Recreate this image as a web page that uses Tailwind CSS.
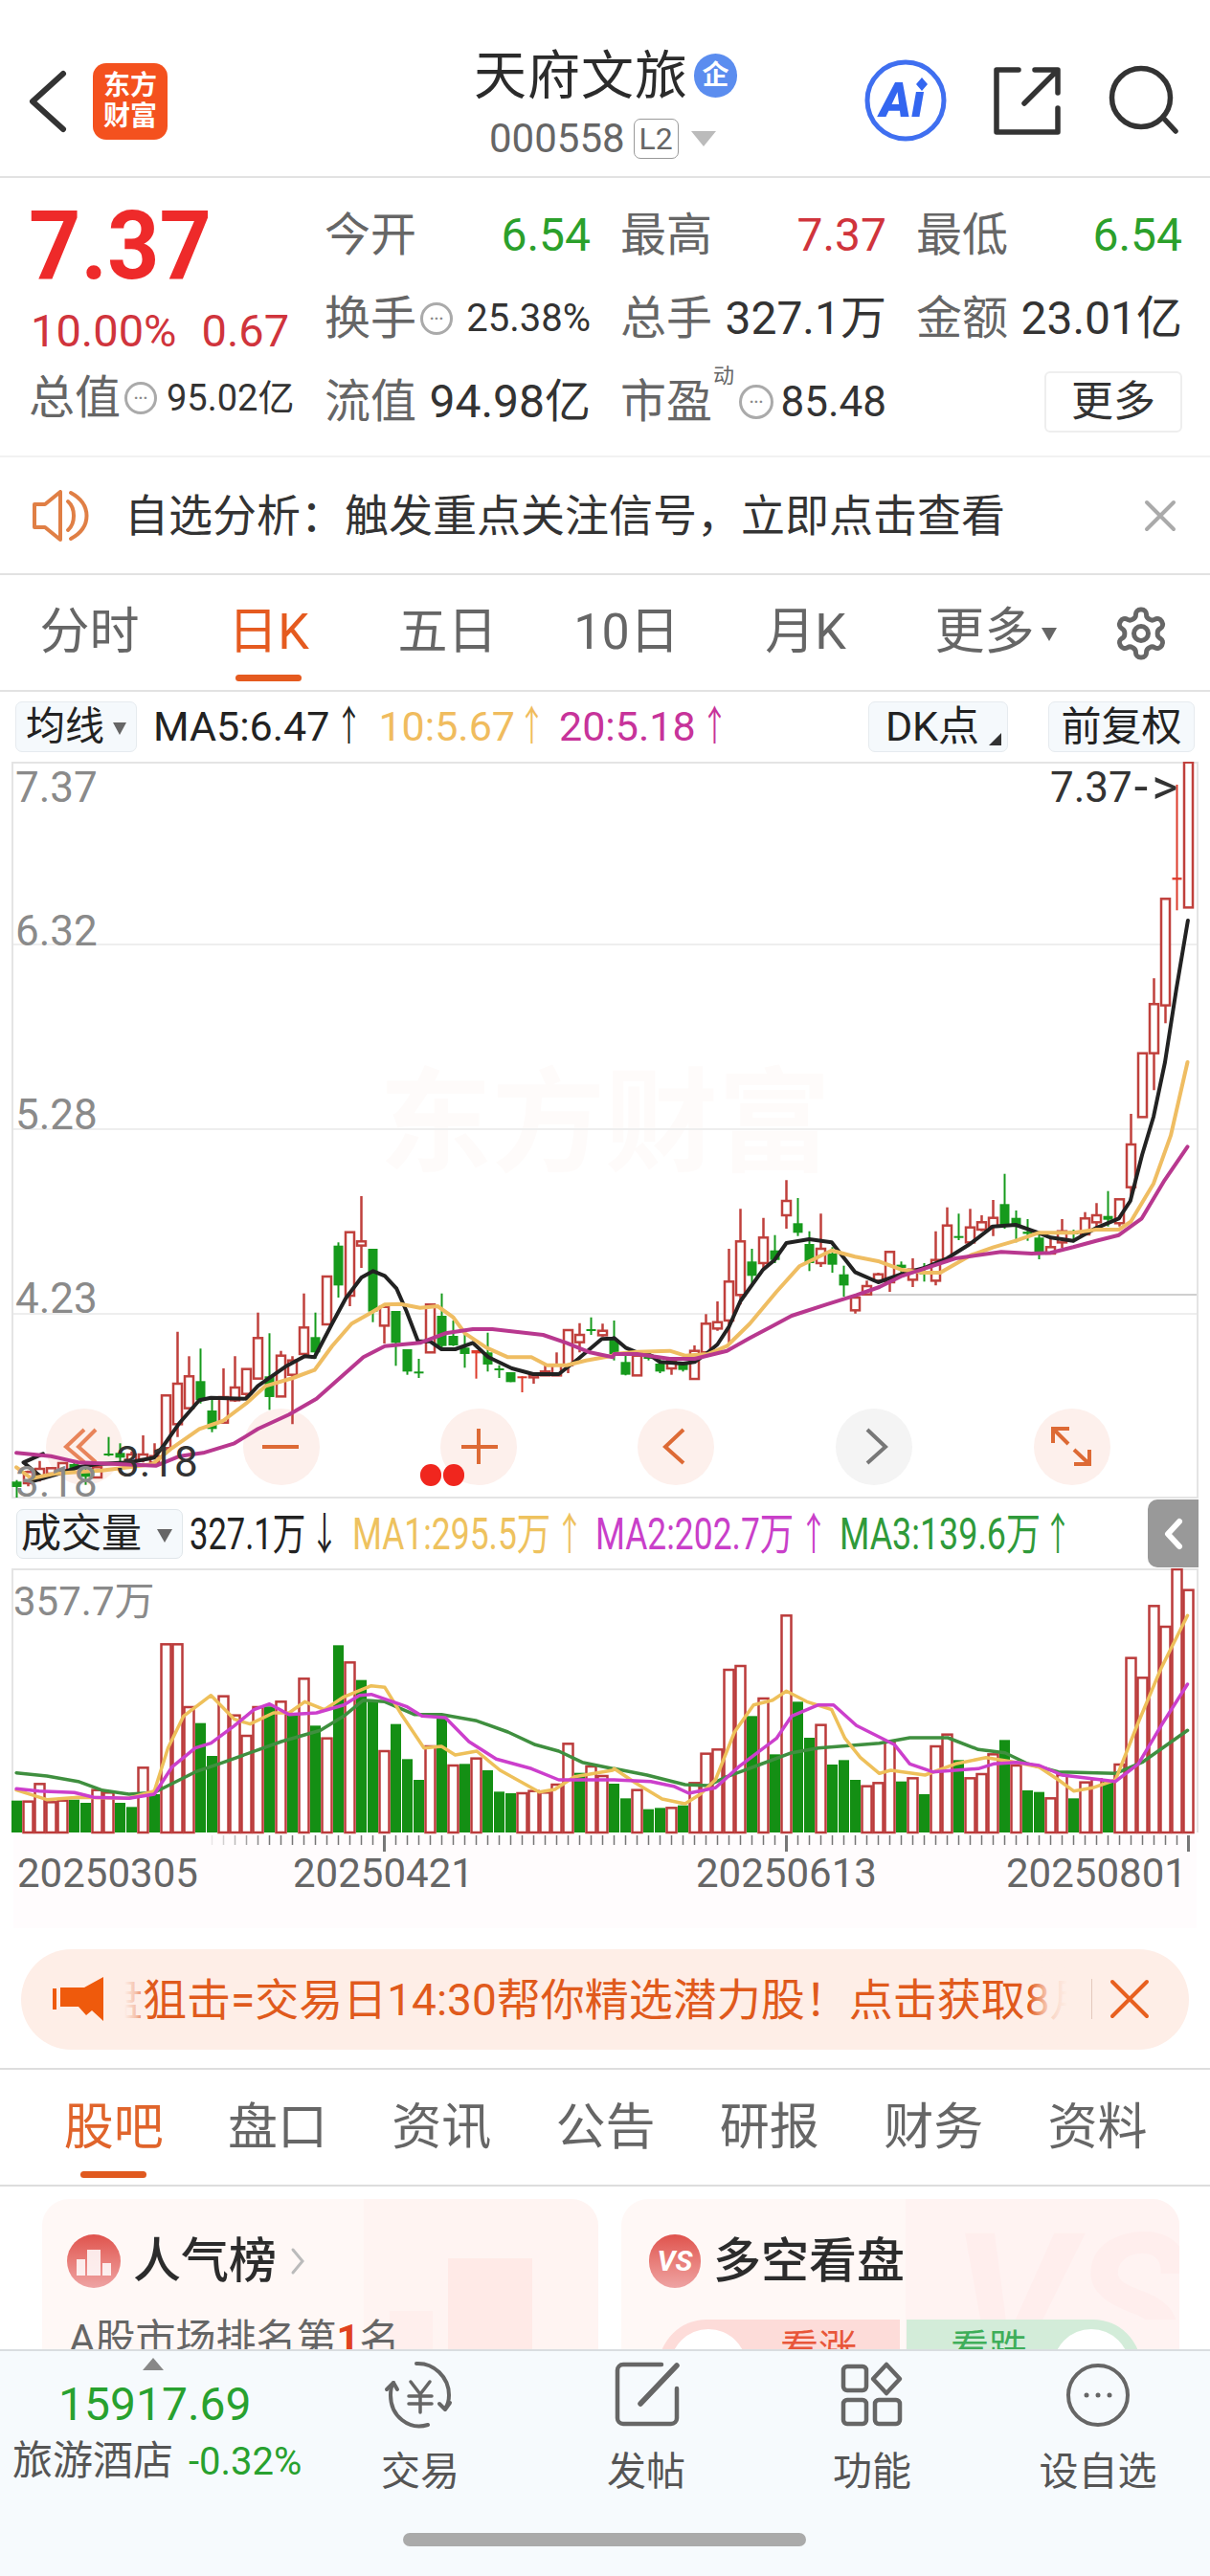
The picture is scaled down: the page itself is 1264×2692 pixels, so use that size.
<!DOCTYPE html>
<html lang="zh-CN">
<head>
<meta charset="UTF-8" />
<title>天府文旅 000558</title>
<script src="https://cdn.jsdelivr.net/npm/@tailwindcss/browser@4"></script>
</head>
<body class="bg-white">
<div class="w-[1264px] h-[2692px] overflow-hidden flex flex-col bg-white text-[#333] font-[family-name:Roboto,'Noto_Sans_CJK_SC',sans-serif]">

  <!-- Header -->
  <header class="flex items-start h-[186px] shrink-0 border-b-2 border-[#e2e2e2]">
    <svg class="ml-[28px] mt-[70px] w-[44px] h-[72px]" viewBox="28 70 44 72" fill="none" stroke="#333" stroke-width="6" stroke-linecap="round" stroke-linejoin="round"><path d="M66 77 34 106 66 135"/></svg>
    <div class="ml-[25px] mt-[66px] w-[78px] h-[80px] rounded-[14px] bg-[#f4511e] text-white font-bold text-[28px] leading-[32px] flex flex-col items-center justify-center">
      <span>东方</span><span>财富</span>
    </div>
    <div class="ml-[320px] flex flex-col">
      <div class="mt-[51px] h-[56px] flex items-center">
        <span class="text-[55px] leading-none tracking-[1px] text-[#2b2b2b] whitespace-nowrap">天府文旅</span>
        <span class="ml-[6px] w-[45px] h-[46px] rounded-full bg-[#5b8def] text-white text-[28px] font-bold flex items-center justify-center">企</span>
      </div>
      <div class="mt-[16px] pl-[16px] h-[44px] flex items-center">
        <span class="text-[42px] leading-none text-[#666]">000558</span>
        <span class="ml-[9px] w-[47px] h-[42px] border border-[#999] rounded-[7px] text-[32px] text-[#666] flex items-center justify-center">L2</span>
        <span class="ml-[13px] w-0 h-0 border-x-[13px] border-x-transparent border-t-[16px] border-t-[#bbb]"></span>
      </div>
    </div>
    <svg class="ml-auto mr-[24px] mt-[50px] w-[340px] h-[100px]" viewBox="900 50 340 100" fill="none" stroke-linecap="round" stroke-linejoin="round">
      <circle cx="946" cy="105" r="40" stroke="#3f6ff0" stroke-width="5"/>
      <text x="919" y="122" fill="#3366f0" font-size="50" font-weight="900" font-style="italic" font-family="Roboto">Aı</text>
      <path d="M963 81 969 88 963 95 957 88Z" fill="#3366f0"/>
      <g stroke="#333" stroke-width="5.5">
        <path d="M1064 73H1041V138H1105V113"/>
        <path d="M1070 108 1104 74M1081 73H1105V97"/>
        <circle cx="1192" cy="102" r="30.5"/>
        <path d="M1215 123 1228 137"/>
      </g>
    </svg>
  </header>

  <!-- Quote stats -->
  <section class="flex h-[292px] shrink-0 pl-[32px] pt-[16px] border-b-2 border-[#f2f2f2]">
    <div class="w-[307px] shrink-0 flex flex-col">
      <div class="h-[114px] flex items-center text-[100px] leading-none font-bold text-[#ee2a2a] -ml-[2px] -mt-[2px]"><span class="inline-block origin-left scale-x-[0.95]">7.37</span></div>
      <div class="h-[62px] flex items-center text-[47px] leading-none text-[#d0343c]"><span>10.00%</span><span class="ml-[26px]">0.67</span></div>
      <div class="h-[80px] flex items-center leading-none -ml-[2px]">
        <span class="text-[48px] text-[#666]">总值</span>
        <span class="ml-[4px] w-[34px] h-[34px] rounded-full border-[3px] border-[#aaa] text-[#888] text-[16px] font-bold flex items-center justify-center">···</span>
        <span class="ml-[10px] text-[38px]">95.02亿</span>
      </div>
    </div>
    <div class="grid grid-cols-[278px_278px_278px] gap-x-[31px] auto-rows-[87px] items-center leading-none">
      <div class="flex justify-between items-center"><span class="text-[48px] text-[#666]">今开</span><span class="text-[48px] text-[#2ba02b]">6.54</span></div>
      <div class="flex justify-between items-center"><span class="text-[48px] text-[#666]">最高</span><span class="text-[48px] text-[#d0343c]">7.37</span></div>
      <div class="flex justify-between items-center"><span class="text-[48px] text-[#666]">最低</span><span class="text-[48px] text-[#2ba02b]">6.54</span></div>

      <div class="flex justify-between items-center">
        <span class="flex items-center text-[48px] text-[#666]">换手<span class="ml-[4px] w-[34px] h-[34px] rounded-full border-[3px] border-[#aaa] text-[#888] text-[16px] font-bold flex items-center justify-center">···</span></span>
        <span class="text-[40px]">25.38%</span>
      </div>
      <div class="flex justify-between items-center"><span class="text-[48px] text-[#666]">总手</span><span class="text-[48px]">327.1万</span></div>
      <div class="flex justify-between items-center"><span class="text-[48px] text-[#666]">金额</span><span class="text-[48px]">23.01亿</span></div>

      <div class="flex justify-between items-center"><span class="text-[48px] text-[#666]">流值</span><span class="text-[48px]">94.98亿</span></div>
      <div class="flex justify-between items-center">
        <span class="relative flex items-center text-[48px] text-[#666]">市盈<span class="absolute left-[97px] -top-[14px] text-[22px]">动</span><span class="ml-[28px] w-[36px] h-[36px] rounded-full border-[3px] border-[#aaa] text-[#888] text-[16px] font-bold flex items-center justify-center">···</span></span>
        <span class="text-[44px]">85.48</span>
      </div>
      <div class="flex justify-end"><span class="w-[144px] h-[64px] rounded-[6px] border-2 border-[#eeeeee] text-[44px] flex items-center justify-center">更多</span></div>
    </div>
  </section>

  <!-- Notice -->
  <section class="flex items-center h-[123px] shrink-0 border-b-2 border-[#e2e2e2]">
    <svg class="ml-[34px] w-[60px] h-[54px]" viewBox="34 511 60 54" fill="none" stroke="#e07f45" stroke-width="4" stroke-linecap="round" stroke-linejoin="round"><path d="M36 526H47L63 513V563L47 550H36Z"/><path d="M71 523C79 530 79 546 71 553"/><path d="M74 514C96 526 96 550 74 562"/></svg>
    <span class="ml-[36px] text-[46px] leading-none text-[#333] whitespace-nowrap">自选分析：触发重点关注信号，立即点击查看</span>
    <svg class="ml-auto mr-[34px] w-[36px] h-[36px]" viewBox="0 0 36 36" stroke="#aaa" stroke-width="4" stroke-linecap="round"><path d="M4 4 32 32M32 4 4 32"/></svg>
  </section>

  <!-- Period tabs -->
  <nav class="relative h-[122px] shrink-0 grid grid-cols-[repeat(6,187px)] items-center border-b-2 border-[#e2e2e2] text-[52px] leading-none text-[#666] text-center">
    <span>分时</span>
    <span class="text-[#e55a1f]">日K</span>
    <span>五日</span>
    <span>10日</span>
    <span>月K</span>
    <span class="relative">更多<span class="absolute left-[153px] top-[21px] w-0 h-0 border-x-[8px] border-x-transparent border-t-[14px] border-t-[#666]"></span></span>
    <span class="absolute left-[246px] top-[104px] w-[69px] h-[7px] rounded-full bg-[#e55a1f]"></span>
    <svg class="absolute left-[1162px] top-[31px] w-[60px] h-[60px]" viewBox="0 0 24 24" fill="none" stroke="#666" stroke-width="2" stroke-linecap="round" stroke-linejoin="round"><path d="M12.22 2h-.44a2 2 0 0 0-2 2v.18a2 2 0 0 1-1 1.73l-.43.25a2 2 0 0 1-2 0l-.15-.08a2 2 0 0 0-2.73.73l-.22.38a2 2 0 0 0 .73 2.73l.15.1a2 2 0 0 1 1 1.72v.51a2 2 0 0 1-1 1.74l-.15.09a2 2 0 0 0-.73 2.73l.22.38a2 2 0 0 0 2.73.73l.15-.08a2 2 0 0 1 2 0l.43.25a2 2 0 0 1 1 1.73V20a2 2 0 0 0 2 2h.44a2 2 0 0 0 2-2v-.18a2 2 0 0 1 1-1.73l.43-.25a2 2 0 0 1 2 0l.15.08a2 2 0 0 0 2.73-.73l.22-.39a2 2 0 0 0-.73-2.73l-.15-.08a2 2 0 0 1-1-1.74v-.5a2 2 0 0 1 1-1.74l.15-.09a2 2 0 0 0 .73-2.73l-.22-.38a2 2 0 0 0-2.73-.73l-.15.08a2 2 0 0 1-2 0l-.43-.25a2 2 0 0 1-1-1.73V4a2 2 0 0 0-2-2z"/><circle cx="12" cy="12" r="3"/></svg>
  </nav>

  <!-- MA legend -->
  <div class="flex items-center h-[73px] shrink-0 text-[43px] leading-none whitespace-nowrap">
    <span class="relative ml-[16px] w-[127px] h-[53px] rounded-[7px] bg-[#f5f9fc] border border-[#e6ebef] text-[41px] text-[#222] flex items-center pl-[10px]">均线<span class="absolute left-[101px] top-[21px] w-0 h-0 border-x-[7px] border-x-transparent border-t-[13px] border-t-[#666]"></span></span>
    <span class="ml-[17px] text-[#222]">MA5:6.47</span>
    <span class="ml-[5px] w-[30px] flex justify-center text-[#222]"><span class="inline-block scale-x-[0.65]">↑</span></span>
    <span class="ml-[16px] text-[#f0bc5e]">10:5.67</span>
    <span class="ml-[3px] w-[30px] flex justify-center text-[#f0bc5e]"><span class="inline-block scale-x-[0.65]">↑</span></span>
    <span class="ml-[13px] text-[#c7339a]">20:5.18</span>
    <span class="ml-[5px] w-[30px] flex justify-center text-[#c7339a]"><span class="inline-block scale-x-[0.65]">↑</span></span>
    <span class="relative ml-auto w-[146px] h-[53px] rounded-[7px] bg-[#f5f9fc] border border-[#e6ebef] text-[#222] flex items-center justify-center pr-[12px]">DK点<span class="absolute right-[6px] bottom-[6px] w-0 h-0 border-l-[13px] border-l-transparent border-b-[13px] border-b-[#333]"></span></span>
    <span class="ml-[42px] mr-[16px] w-[153px] h-[53px] rounded-[7px] bg-[#f5f9fc] border border-[#e6ebef] text-[42px] text-[#222] flex items-center justify-center">前复权</span>
  </div>

  <!-- Candles -->
  <section class="relative h-[770px] shrink-0">
    <span class="absolute left-[396px] top-[320px] text-[118px] leading-none font-bold text-[#fefbfa] whitespace-nowrap">东方财富</span>
    <svg id="kline" class="absolute inset-0 w-[1264px] h-[770px]" viewBox="0 796 1264 770" fill="none">
      <path d="M13 1566V797H1251V1566" stroke="#e4e4e4" stroke-width="2"/>
      <path d="M13 1565H1251" stroke="#e4e4e4" stroke-width="2"/>
      <path d="M14 987H1250M14 1180H1250M14 1373H1250" stroke="#eeeeee" stroke-width="2"/>
      <path d="M900 1353H1250" stroke="#cfcfcf" stroke-width="2"/>
      <circle cx="88" cy="1512" r="40" fill="#fdf0ec"/>
      <circle cx="294" cy="1512" r="40" fill="#fdf0ec"/>
      <circle cx="500" cy="1512" r="40" fill="#fdf0ec"/>
      <circle cx="706" cy="1512" r="40" fill="#fdf0ec"/>
      <circle cx="913" cy="1512" r="40" fill="#f4f4f4"/>
      <circle cx="1120" cy="1512" r="40" fill="#fdf0ec"/>
      <g stroke="#dd6a35" stroke-width="4">
        <path d="M88 1494 69 1512 88 1528M100 1494 82 1512 100 1528" stroke="#e8845a"/>
        <path d="M274 1512H312"/>
        <path d="M482 1512H520M500 1493V1530"/>
        <path d="M714 1494 695 1512 714 1529"/>
        <path d="M906 1494 925 1512 906 1529" stroke="#777"/>
        <path d="M1100 1508V1493H1117M1100 1493 1116 1509M1138 1515V1530H1122M1138 1530 1122 1515"/>
      </g>
    </svg>
    <span class="absolute left-[16px] top-[5px] text-[44px] leading-[44px] text-[#8a8a8a]">7.37</span>
    <span class="absolute left-[16px] top-[155px] text-[44px] leading-[44px] text-[#8a8a8a]">6.32</span>
    <span class="absolute left-[16px] top-[347px] text-[44px] leading-[44px] text-[#8a8a8a]">5.28</span>
    <span class="absolute left-[16px] top-[539px] text-[44px] leading-[44px] text-[#8a8a8a]">4.23</span>
    <span class="absolute left-[16px] top-[736px] text-[44px] leading-[34px] text-[#8a8a8a]">3.18</span>
    <span class="absolute left-[121px] top-[710px] text-[44px] leading-[44px] text-[#333]">3.18</span>
    <span class="absolute left-[1097px] top-[5px] text-[44px] leading-[44px] text-[#333] whitespace-nowrap flex items-center">7.37<span class="ml-[2px] text-[52px] tracking-[4px]">-&gt;</span></span>
    <span class="absolute left-[439px] top-[734px] w-[22px] h-[23px] rounded-full bg-[#f0261e]"></span>
    <span class="absolute left-[463px] top-[734px] w-[22px] h-[23px] rounded-full bg-[#f0261e]"></span>
  </section>

  <!-- Volume legend -->
  <div class="relative flex items-center h-[73px] shrink-0 text-[46px] leading-none whitespace-nowrap">
    <span class="relative ml-[17px] w-[174px] h-[52px] rounded-[7px] bg-[#f5f9fc] border border-[#e0e6ea] text-[42px] text-[#222] flex items-center pl-[4px]">成交量<span class="absolute left-[146px] top-[20px] w-0 h-0 border-x-[8px] border-x-transparent border-t-[14px] border-t-[#666]"></span></span>
    <span class="ml-[7px] w-[120px] text-[#222]"><span class="inline-block origin-left scale-x-[0.75]">327.1万</span></span>
    <span class="ml-[6px] w-[30px] flex justify-center text-[#222]"><span class="inline-block scale-x-[0.65]">↓</span></span>
    <span class="ml-[14px] w-[204px] text-[#eec25e]"><span class="inline-block origin-left scale-x-[0.77]">MA1:295.5万</span></span>
    <span class="ml-[8px] w-[30px] flex justify-center text-[#eec25e]"><span class="inline-block scale-x-[0.65]">↑</span></span>
    <span class="ml-[12px] w-[204px] text-[#c93fc9]"><span class="inline-block origin-left scale-x-[0.77]">MA2:202.7万</span></span>
    <span class="ml-[9px] w-[30px] flex justify-center text-[#c93fc9]"><span class="inline-block scale-x-[0.65]">↑</span></span>
    <span class="ml-[12px] w-[208px] text-[#2f9a3a]"><span class="inline-block origin-left scale-x-[0.78]">MA3:139.6万</span></span>
    <span class="ml-[5px] w-[30px] flex justify-center text-[#2f9a3a]"><span class="inline-block scale-x-[0.65]">↑</span></span>
    <span class="absolute left-[1199px] top-[1px] w-[53px] h-[71px] rounded-l-[10px] bg-[#999] flex items-center justify-center">
      <svg class="w-[24px] h-[36px]" viewBox="0 0 24 36" fill="none" stroke="#fff" stroke-width="6" stroke-linecap="round" stroke-linejoin="round"><path d="M18 5 6 18 18 31"/></svg>
    </span>
  </div>

  <!-- Volume -->
  <section class="relative h-[398px] shrink-0">
    <div class="absolute left-[14px] top-[276px] w-[1236px] h-[100px] bg-[#fffcfd]"></div>
    <svg id="vol" class="absolute left-0 top-0 w-[1264px] h-[300px]" viewBox="0 1639 1264 300" fill="none">
      <path d="M13 1915V1640H1251V1915" stroke="#e4e4e4" stroke-width="2"/>
    </svg>
    <span class="absolute left-[14px] top-[14px] text-[42px] leading-[42px] text-[#8a8a8a]">357.7万</span>
    <span class="absolute left-[18px] top-[298px] text-[42px] leading-[42px] text-[#666]">20250305</span>
    <span class="absolute left-[306px] top-[298px] text-[42px] leading-[42px] text-[#666]">20250421</span>
    <span class="absolute left-[727px] top-[298px] text-[42px] leading-[42px] text-[#666]">20250613</span>
    <span class="absolute left-[1051px] top-[298px] text-[42px] leading-[42px] text-[#666]">20250801</span>
  </section>

  <!-- Ad banner -->
  <div class="h-[126px] shrink-0 border-b-2 border-[#dddddd]">
    <div class="relative mx-[22px] h-[105px] rounded-full bg-[#feeee7] flex items-center overflow-hidden">
      <svg class="absolute left-[33px] top-[29px] w-[56px] h-[46px]" viewBox="55 2066 56 46" fill="#ef5a0c"><path d="M55 2078H59V2100H55Z"/><path d="M63 2077H88L108 2066V2112L96 2101 90 2106 82 2097H63Z"/></svg>
      <div class="absolute left-[108px] top-0 w-[985px] h-[105px] flex items-center overflow-hidden">
        <span class="-ml-[73px] text-[46px] leading-none text-[#e05a1c] whitespace-nowrap">尾盘狙击=交易日14:30帮你精选潜力股！点击获取8月新股</span>
        <span class="absolute left-0 top-0 w-[24px] h-full bg-gradient-to-r from-[#feeee7] via-[#feeee7]/70 to-[#feeee7]/0"></span>
        <span class="absolute right-0 top-0 w-[40px] h-full bg-gradient-to-l from-[#feeee7] via-[#feeee7]/80 to-[#feeee7]/0"></span>
      </div>
      <span class="absolute left-[1118px] top-[31px] w-px h-[42px] bg-[#e3c9bd]"></span>
      <svg class="absolute left-[1136px] top-[31px] w-[44px] h-[42px]" viewBox="0 0 44 42" stroke="#e8601f" stroke-width="4" stroke-linecap="round"><path d="M4 3 40 39M40 3 4 39"/></svg>
    </div>
  </div>

  <!-- Content tabs -->
  <nav class="relative h-[122px] shrink-0 pl-[33px] pt-[2px] grid grid-cols-[repeat(7,171.3px)] items-center border-b-2 border-[#dddddd] text-[52px] leading-none text-[#666] text-center">
    <span class="text-[#e0642b]">股吧</span>
    <span>盘口</span>
    <span>资讯</span>
    <span>公告</span>
    <span>研报</span>
    <span>财务</span>
    <span>资料</span>
    <span class="absolute left-[84px] top-[106px] w-[69px] h-[7px] rounded-full bg-[#e0591f]"></span>
  </nav>

  <!-- Cards, cut off by the bottom bar -->
  <div class="flex-1 min-h-0 overflow-hidden pt-[13px] pl-[44px] flex gap-[24px]">
    <div class="relative w-[581px] h-[300px] rounded-t-[28px] bg-[#fff8f6] overflow-hidden">
      <div class="absolute left-[336px] top-0 w-[245px] h-[300px] rounded-tr-[28px] bg-[#fff4f2]"></div>
      <div class="absolute left-[424px] top-[62px] w-[88px] h-[240px] bg-[#ffeae7]"></div>
      <div class="absolute left-[363px] top-[117px] w-[45px] h-[200px] bg-[#ffefed]"></div>
      <div class="absolute left-[26px] top-[37px] w-[56px] h-[56px] rounded-full bg-gradient-to-b from-[#df524d] to-[#eea3a3] flex items-end justify-center gap-[2px] pb-[13px]">
        <span class="w-[9px] h-[17px] bg-white/85"></span>
        <span class="w-[14px] h-[27px] bg-white/85"></span>
        <span class="w-[9px] h-[13px] bg-white/85"></span>
      </div>
      <span class="absolute left-[95px] top-[40px] text-[50px] leading-[50px] font-medium text-[#2c2c2c]">人气榜</span>
      <svg class="absolute left-[259px] top-[49px] w-[16px] h-[32px]" viewBox="0 0 16 32" fill="none" stroke="#bbb" stroke-width="3" stroke-linecap="round"><path d="M3 4 13 16 3 28"/></svg>
      <span class="absolute left-[28px] top-[126px] text-[42px] leading-[42px] text-[#666] whitespace-nowrap">A股市场排名第<b class="text-[#e0421d]">1</b>名</span>
    </div>
    <div class="relative w-[583px] h-[300px] rounded-t-[28px] bg-[#fff8f6] overflow-hidden">
      <div class="absolute left-[297px] top-0 w-[286px] h-[300px] bg-[#fff3f2]"></div>
      <span class="absolute left-[345px] top-[10px] h-[116px] overflow-hidden text-[200px] leading-[200px] italic font-bold text-[#ffeeed]">VS</span>
      <span class="absolute left-[29px] top-[37px] w-[54px] h-[56px] rounded-full bg-gradient-to-b from-[#df524d] to-[#eea3a3] text-white text-[30px] leading-none italic font-bold flex items-center justify-center">VS</span>
      <span class="absolute left-[96px] top-[40px] text-[50px] leading-[50px] font-medium text-[#2c2c2c]">多空看盘</span>
      <div class="absolute left-[39px] top-[126px] w-[252px] h-[100px] rounded-tl-[50px] bg-[#fddcd9] overflow-hidden">
        <span class="absolute left-[12px] top-[10px] w-[80px] h-[80px] rounded-full bg-white"></span>
        <span class="absolute left-[127px] top-[11px] text-[40px] leading-[40px] text-[#e8563a]">看涨</span>
      </div>
      <div class="absolute left-[298px] top-[126px] w-[245px] h-[100px] rounded-tr-[50px] bg-[#d3ecd9] overflow-hidden">
        <span class="absolute right-[12px] top-[10px] w-[80px] h-[80px] rounded-full bg-white"></span>
        <span class="absolute left-[46px] top-[11px] text-[40px] leading-[40px] text-[#3fae5a]">看跌</span>
      </div>
    </div>
  </div>

  <!-- Bottom bar -->
  <footer class="relative h-[237px] shrink-0 bg-[#f6fafd] border-t-2 border-[#d9dde0] grid grid-cols-[321px_236px_236px_236px_236px] items-start text-[41px] leading-none text-[#555]">
    <div class="relative h-[140px]">
      <span class="absolute left-[149px] top-[7px] w-0 h-0 border-x-[11px] border-x-transparent border-b-[13px] border-b-[#888]"></span>
      <span class="absolute left-[61px] top-[32px] text-[48px] leading-[48px] text-[#28a12f]">15917.69</span>
      <span class="absolute left-[13px] top-[94px] text-[42px] leading-[42px] text-[#555] whitespace-nowrap">旅游酒店</span>
      <span class="absolute left-[197px] top-[96px] text-[40px] leading-[40px] text-[#28a12f]">-0.32%</span>
    </div>
    <div class="flex flex-col items-center pt-[9px]">
      <svg class="w-[80px] h-[74px]" viewBox="0 0 80 74" fill="none" stroke="#666" stroke-width="4" stroke-linecap="round" stroke-linejoin="round">
        <path d="M36 4C54 3 70 18 70 37 70 43 69 47 66 51M48 68C28 74 9 59 9 37 9 31 10 27 12 24"/>
        <path d="M5 31 12 24 16 31M60 46 66 52 71 45"/>
        <path d="M30 23 40 36 50 23M40 36V55M28 38H52M28 46H52" stroke-width="3.5"/>
      </svg>
      <span class="mt-[23px]">交易</span>
    </div>
    <div class="flex flex-col items-center pt-[9px]">
      <svg class="w-[80px] h-[74px]" viewBox="0 0 80 74" fill="none" stroke="#666" stroke-width="4.5" stroke-linecap="round" stroke-linejoin="round">
        <path d="M56 5H16A6 6 0 0 0 10 11V61A6 6 0 0 0 16 67H66A6 6 0 0 0 72 61V30"/>
        <path d="M72 6 34 46" stroke-width="5.5"/>
      </svg>
      <span class="mt-[23px]">发帖</span>
    </div>
    <div class="flex flex-col items-center pt-[9px]">
      <svg class="w-[80px] h-[74px]" viewBox="0 0 80 74" fill="none" stroke="#666" stroke-width="4.5" stroke-linejoin="round">
        <rect x="10" y="7" width="24" height="25" rx="4"/>
        <path d="M55 5 69 20 55 35 41 20Z"/>
        <rect x="10" y="42" width="24" height="25" rx="4"/>
        <rect x="43" y="42" width="26" height="25" rx="4"/>
      </svg>
      <span class="mt-[23px]">功能</span>
    </div>
    <div class="flex flex-col items-center pt-[9px]">
      <svg class="w-[80px] h-[74px]" viewBox="0 0 80 74" fill="none" stroke="#666" stroke-width="4">
        <circle cx="40" cy="37" r="31"/>
        <circle cx="28" cy="37" r="2.5" fill="#666" stroke="none"/>
        <circle cx="40" cy="37" r="2.5" fill="#666" stroke="none"/>
        <circle cx="52" cy="37" r="2.5" fill="#666" stroke="none"/>
      </svg>
      <span class="mt-[23px]">设自选</span>
    </div>
    <span class="absolute left-[421px] top-[190px] w-[421px] h-[14px] rounded-full bg-[#aaaaaa]"></span>
  </footer>
</div>

<script>
  // values read off the chart, y in 3x units from the given base row
  const candleX = (i) => 17.5 + 12 * i;

  // [type, high, body top, body bottom, low]
  const candlesLeft = [ // base 1200
    ["g",1040,1045,1062,1095],["r",1010,1015,1050,1060],["r",980,1005,1035,1045],["r",1000,1003,1020,1030],
    ["r",985,987,1010,1030],["g",985,990,1005,1020],["g",990,1010,1030,1055],["r",990,1000,1032,1032],
    ["g",905,960,963,965],["g",925,955,970,985],["r",950,960,985,990],["r",900,960,975,985],
    ["r",925,965,985,990],["r",775,775,940,960],["r",575,738,865,905],["r",652,715,815,815],
    ["g",628,730,790,800],["g",780,822,880,890],["r",690,780,860,860],["r",652,750,790,795],
    ["r",692,692,770,780],["r",515,595,722,722],["g",580,715,780,820],["r",635,650,778,778],
    ["r",652,665,710,865],["r",455,562,645,645],["g",515,592,640,660],["r",402,402,552,552],
    ["g",295,305,430,468],["r",263,263,462,495],["r",150,292,305,375],["g",315,315,512,545],
    ["r",497,497,556,612],["g",510,510,610,682],["g",630,630,700,710],["g",660,703,707,720],
    ["r",490,490,640,640],["g",455,525,620,625],["g",540,588,618,620],["g",580,625,645,688],
    ["d",638,638,648,722],["g",578,640,678,700],["g",680,693,697,720],["g",702,702,733,733],
    ["d",715,718,722,765],["r",710,710,718,738],["r",680,700,712,712],["r",640,680,712,712],
    ["r",570,570,680,705],["r",548,585,608,640],["g",530,570,574,585],["r",550,572,586,590],
  ];
  const candlesRight = [ // base 1100
    ["g",840,900,945,965],["g",950,970,1010,1012],["r",950,950,1012,1012],["g",945,945,960,965],
    ["g",960,975,1000,1005],["r",965,965,990,1010],["g",975,975,995,1000],["r",918,935,1023,1023],
    ["r",820,850,940,940],["r",780,845,865,872],["r",615,718,840,910],["r",490,592,760,790],
    ["g",615,655,700,730],["r",518,580,660,680],["g",572,620,650,660],["r",400,465,510,552],
    ["g",456,535,565,575],["g",560,600,660,685],["r",505,615,660,672],["g",610,630,665,690],
    ["g",668,695,730,765],["r",760,768,808,818],["r",715,732,758,760],["r",690,695,715,720],
    ["r",625,625,720,750],["g",655,670,680,695],["r",645,680,712,735],["g",660,690,700,718],
    ["r",560,650,715,730],["r",485,542,650,650],["g",505,578,582,588],["r",490,548,595,595],
    ["r",510,532,555,560],["r",462,518,545,575],["g",380,475,545,552],["g",495,518,540,595],
    ["g",522,565,572,590],["g",570,580,625,648],["r",580,610,630,630],["r",522,560,595,612],
    ["g",555,565,575,595],["r",500,520,570,570],["r",472,510,532,552],["g",434,518,530,545],
    ["r",460,460,535,545],["r",192,288,422,450],
  ];
  const candlesTail = [ // base 790
    ["r",932,932,1132,1132],["r",697,778,932,1048],["r",448,448,782,838],["d",90,385,392,484],["r",20,20,475,475],
  ];

  const maLines = [
    { color: "#222222", width: 4, left: [110,958,60,985,105,1030,80,1045,150,1020,200,1000,250,990,330,985,395,970,420,930,460,860,510,790,540,782,630,785,660,745,730,685,780,652,805,655,850,550,885,470,925,405,955,385,985,400,1015,440,1040,510,1070,605,1100,605,1130,630,1165,630,1210,610,1250,655,1310,690,1365,708,1430,708,1480,660,1540,598,1568,596],
      right: [4,895,34,925,64,940,94,945,124,970,185,975,215,970,250,940,275,915,305,860,335,780,395,680,425,650,456,597,516,585,575,595,636,688,697,720,757,695,818,675,878,645,938,600,998,545,1058,540,1118,565,1150,580,1209,590,1269,550,1329,520,1359,465,1390,320,1420,200,1450,30,1480,-200,1510,-414] },
    { color: "#efbd62", width: 4, left: [42,1000,80,1035,140,1020,200,1015,260,1010,330,1000,390,990,440,940,510,880,570,855,630,800,680,745,750,720,805,695,850,620,900,550,950,515,985,490,1025,488,1075,500,1120,495,1160,530,1190,580,1245,625,1300,655,1360,655,1400,680,1450,680,1500,665,1568,650],
      right: [4,945,64,938,150,935,190,950,250,945,300,920,360,850,430,750,490,670,575,620,636,640,700,655,757,680,818,690,860,690,940,635,1000,610,1058,590,1118,565,1209,565,1269,555,1329,555,1360,530,1420,410,1465,260,1509,30] },
    { color: "#b8388f", width: 4, left: [42,955,130,965,200,985,400,995,460,965,520,955,600,925,660,880,740,835,810,785,870,720,930,655,985,620,1075,610,1140,580,1210,567,1260,567,1390,585,1450,610,1510,640,1568,655],
      right: [4,945,64,945,150,960,215,960,300,935,360,895,415,860,470,825,560,790,640,760,700,735,760,700,850,665,900,645,1020,625,1100,630,1149,628,1209,610,1269,590,1329,572,1389,520,1449,400,1509,295] },
  ];

  const volLeft = "g965 r968 r913 r970 r965 g962 g972 r932 r940 g972 g985 r862 g945 r475 r475 r672 g722 g825 r638 r698 r762 r672 g670 r655 g690 r583 g730 r770 g478 r532 g587 g650 r810 g725 g835 g900 r795 g695 r855 g850 r833 g870 g937 g942 r942 r935 r940 r915 r787 g878 r858 r888".split(" ");
  const volRight = "g912 g958 r932 g992 g988 r988 g980 r910 r818 r805 r555 r543 g700 r645 g820 r385 g655 g768 r728 g852 g838 g900 r920 r910 r780 g905 r895 g945 r795 r758 g838 r895 r882 r820 g775 r855 g933 g938 r958 r885 g958 r908 r898 g905 r852 r518 r580 r355 r420 r240 r305".split(" ");

  const volLines = [
    { color: "#3f8f3f", left: [42,878,120,888,200,905,260,932,330,945,395,940,500,875,560,850,720,780,820,745,880,700,930,650,985,655,1060,695,1130,695,1220,715,1300,750,1370,790,1430,810,1490,845,1568,865],
      right: [4,865,90,885,190,915,250,918,300,890,380,855,470,815,540,800,700,785,780,768,880,768,960,805,1030,815,1090,850,1170,875,1320,880,1390,845,1509,745] },
    { color: "#eec05a", left: [42,932,120,962,200,955,330,958,395,935,430,800,470,700,540,635,600,710,640,725,700,690,740,690,780,655,830,680,880,640,950,605,985,610,1030,700,1085,800,1130,795,1165,822,1220,810,1280,870,1380,938,1420,930,1470,890,1568,870],
      right: [4,865,60,910,130,960,190,975,230,945,270,900,320,750,370,665,420,650,456,622,510,655,575,680,610,770,650,830,700,880,730,870,820,885,900,850,980,830,1060,845,1120,860,1170,900,1210,935,1260,925,1320,900,1380,720,1440,550,1509,385] },
    { color: "#cc3fcc", left: [42,928,100,935,190,940,240,955,330,958,395,945,440,860,500,800,540,785,600,730,650,680,690,662,740,695,810,690,880,665,920,635,950,632,1040,670,1080,700,1140,705,1200,780,1270,835,1360,865,1430,900,1568,900],
      right: [4,900,100,905,160,920,200,942,270,925,330,860,430,770,470,700,540,665,580,665,640,730,740,790,780,850,840,875,960,865,1000,850,1060,845,1120,855,1180,885,1320,905,1380,850,1440,730,1509,600] },
  ];

  function candleSvg(c, i, base) {
    const [type, hi, top, bot, lo] = c;
    const y = (v) => (base + v / 3).toFixed(1);
    const x = candleX(i);
    const color = type === "g" ? "#169a1c" : type === "d" ? "#dd3a2a" : "#c0403c";
    let out = `<path d="M${x} ${y(hi)}V${y(lo)}" stroke="${color}" stroke-width="2"/>`;
    if (type === "r") {
      out = `<path d="M${x} ${y(hi)}V${y(top)}M${x} ${y(bot)}V${y(lo)}" stroke="${color}" stroke-width="2.5"/>`;
      out += `<rect x="${x - 4.5}" y="${y(top)}" width="9" height="${(bot - top) / 3}" fill="#fff" stroke="${color}" stroke-width="2.5"/>`;
    } else if (bot - top < 15) {
      out += `<path d="M${x - 5} ${y(top)}H${x + 5}" stroke="${color}" stroke-width="${Math.max(2, (bot - top) / 3)}"/>`;
    } else {
      out += `<rect x="${x - 5}" y="${y(top)}" width="10" height="${(bot - top) / 3}" fill="${color}"/>`;
    }
    return out;
  }

  const polyline = (pts, color, width) =>
    `<polyline points="${pts.join(" ")}" stroke="${color}" stroke-width="${width}" stroke-linejoin="round" stroke-linecap="round"/>`;

  // x of the left half was read at 2.45x, of the right half at 2.513x from 640
  const ptsOf = (line, leftBase, rightBase) => {
    const pts = [];
    for (let i = 0; i < line.left.length; i += 2) pts.push(`${(line.left[i] / 2.45).toFixed(1)},${(leftBase + line.left[i + 1] / 3).toFixed(1)}`);
    for (let i = 0; i < line.right.length; i += 2) pts.push(`${(640 + line.right[i] / 2.513).toFixed(1)},${(rightBase + line.right[i + 1] / 3).toFixed(1)}`);
    return pts;
  };

  let kline = "";
  candlesLeft.forEach((c, i) => (kline += candleSvg(c, i, 1200)));
  candlesRight.forEach((c, i) => (kline += candleSvg(c, i + 52, 1100)));
  candlesTail.forEach((c, i) => (kline += candleSvg(c, i + 98, 790)));
  maLines.forEach((l) => (kline += polyline(ptsOf(l, 1200, 1100), l.color, l.width)));
  document.getElementById("kline").insertAdjacentHTML("beforeend", kline);

  let vol = "";
  const allVol = volLeft.concat(volRight);
  const baseY = 1915;
  allVol.forEach((v, i) => {
    const x = candleX(i);
    const top = 1560 + Number(v.slice(1)) / 3;
    if (v[0] === "g") vol += `<rect x="${x - 5.5}" y="${top}" width="11" height="${baseY - top}" fill="#148f14"/>`;
    else vol += `<rect x="${x - 5}" y="${top}" width="10" height="${baseY - top}" fill="#fff" stroke="#bb3b3b" stroke-width="2.5"/>`;
  });
  volLines.forEach((l) => (vol += polyline(ptsOf(l, 1560, 1560), l.color, 3.5)));
  for (let i = 17; i <= 102; i++) {
    const x = candleX(i);
    const major = i === 32 || i === 67 || i === 102;
    const op = i < 22 ? (i - 16) / 6 : 1;
    vol += `<path d="M${x} 1918V${major ? 1935 : 1928}" stroke="#777" stroke-width="${major ? 3 : 1.5}" opacity="${op}"/>`;
  }
  document.getElementById("vol").insertAdjacentHTML("beforeend", vol);
</script>
</body>
</html>
